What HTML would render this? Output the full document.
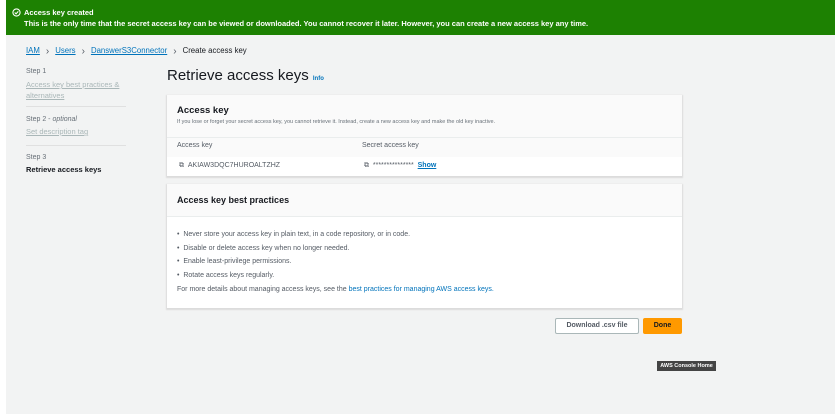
<!DOCTYPE html>
<html><head><meta charset="utf-8"><style>
*{margin:0;padding:0;box-sizing:border-box}
body{width:840px;height:414px;background:#fff;font-family:"Liberation Sans",sans-serif;position:relative;overflow:hidden;color:#16191f}
.a{position:absolute;white-space:nowrap}
#bg{left:6px;top:0;width:829px;height:414px;background:#f2f3f3}
#ban{left:6px;top:0;width:829px;height:35px;background:#1d8102;color:#fff}
.lk{color:#0073bb;text-decoration:underline}
.g{color:#aab7b8}
.card{background:#fff;box-shadow:0 1px 1px 1px #dcdcdc;left:167px;width:515px}
.s{font-size:7px;color:#545b64}
.ch{font-size:10px;color:#545b64;padding:0 6px;position:relative;top:1px}
</style></head><body>
<div class="a" id="bg"></div>
<div class="a" id="ban">
<svg class="a" style="left:6px;top:8px" width="9" height="9" viewBox="0 0 10 10"><circle cx="5" cy="5" r="4" fill="none" stroke="#fff" stroke-width="1.2"/><path d="M3 5l1.5 1.5L7 3.7" fill="none" stroke="#fff" stroke-width="1.2"/></svg>
<div class="a" style="left:18px;top:8px;font-size:7.5px;font-weight:bold">Access key created</div>
<div class="a" style="left:18px;top:19px;font-size:7.5px;font-weight:bold">This is the only time that the secret access key can be viewed or downloaded. You cannot recover it later. However, you can create a new access key any time.</div>
</div>
<div class="a" style="left:26px;top:45px;font-size:7.8px;color:#16191f"><span class="lk">IAM</span><span class="ch">›</span><span class="lk">Users</span><span class="ch">›</span><span class="lk">DanswerS3Connector</span><span class="ch">›</span>Create access key</div>
<div class="a s" style="left:26px;top:68px;color:#687078">Step 1</div>
<div class="a g" style="left:26px;top:79px;font-size:7.5px;line-height:11px;text-decoration:underline">Access key best practices &amp;<br>alternatives</div>
<div class="a" style="left:26px;top:106px;width:100px;height:1px;background:#e0e0e0"></div>
<div class="a s" style="left:26px;top:116px;color:#687078">Step 2 - <i>optional</i></div>
<div class="a g" style="left:26px;top:127px;font-size:7.5px;text-decoration:underline">Set description tag</div>
<div class="a" style="left:26px;top:145px;width:100px;height:1px;background:#e0e0e0"></div>
<div class="a s" style="left:26px;top:154px;color:#687078">Step 3</div>
<div class="a" style="left:26px;top:165px;font-size:7.5px;font-weight:bold">Retrieve access keys</div>
<div class="a" style="left:167px;top:67px;font-size:15px">Retrieve access keys <span style="font-size:6px;color:#0073bb;font-weight:bold">Info</span></div>
<div class="a card" style="top:95px;height:81px">
<div class="a" style="left:0;top:0;width:515px;height:42px;background:#fafafa"></div>
<div class="a" style="left:10px;top:10px;font-size:9.5px;font-weight:bold">Access key</div>
<div class="a" style="left:10px;top:24px;font-size:5.5px;color:#687078">If you lose or forget your secret access key, you cannot retrieve it. Instead, create a new access key and make the old key inactive.</div>
<div class="a" style="left:0;top:42px;width:515px;height:20px;background:#fafafa;border-top:1px solid #eaeded"></div>
<div class="a" style="left:10px;top:47px;font-size:7px;color:#545b64">Access key</div>
<div class="a" style="left:195px;top:47px;font-size:7px;color:#545b64">Secret access key</div>
<div class="a" style="left:12px;top:67px;font-size:7px;color:#545b64">⧉ &nbsp;AKIAW3DQC7HUROALTZHZ</div>
<div class="a" style="left:197px;top:67px;font-size:7px;color:#545b64">⧉ &nbsp;*************** &nbsp;<b style="color:#0073bb;text-decoration:underline;text-decoration-thickness:0.5px">Show</b></div>
</div>
<div class="a card" style="top:184px;height:124px">
<div class="a" style="left:0;top:0;width:515px;height:33px;background:#fafafa;border-bottom:1px solid #eaeded"></div>
<div class="a" style="left:10px;top:11px;font-size:9px;font-weight:bold">Access key best practices</div>
<div class="a" style="left:10px;top:44px;font-size:7px;color:#545b64;line-height:13.5px">• &nbsp;Never store your access key in plain text, in a code repository, or in code.<br>• &nbsp;Disable or delete access key when no longer needed.<br>• &nbsp;Enable least-privilege permissions.<br>• &nbsp;Rotate access keys regularly.</div>
<div class="a" style="left:10px;top:102px;font-size:7px;color:#545b64">For more details about managing access keys, see the <span style="color:#0073bb">best practices for managing AWS access keys.</span></div>
</div>
<div class="a" style="left:555px;top:318px;width:84px;height:16px;background:#fff;border:1px solid #aab7b8;border-radius:2px;font-size:7px;color:#545b64;font-weight:bold;text-align:center;line-height:14px">Download .csv file</div>
<div class="a" style="left:643px;top:318px;width:39px;height:16px;background:#ff9900;border-radius:2px;font-size:7px;color:#16191f;font-weight:bold;text-align:center;line-height:16px">Done</div>
<div class="a" style="left:657px;top:361px;width:59px;height:10px;background:#444;color:#fff;font-size:5.5px;font-weight:bold;text-align:center;line-height:10px">AWS Console Home</div>
</body></html>
